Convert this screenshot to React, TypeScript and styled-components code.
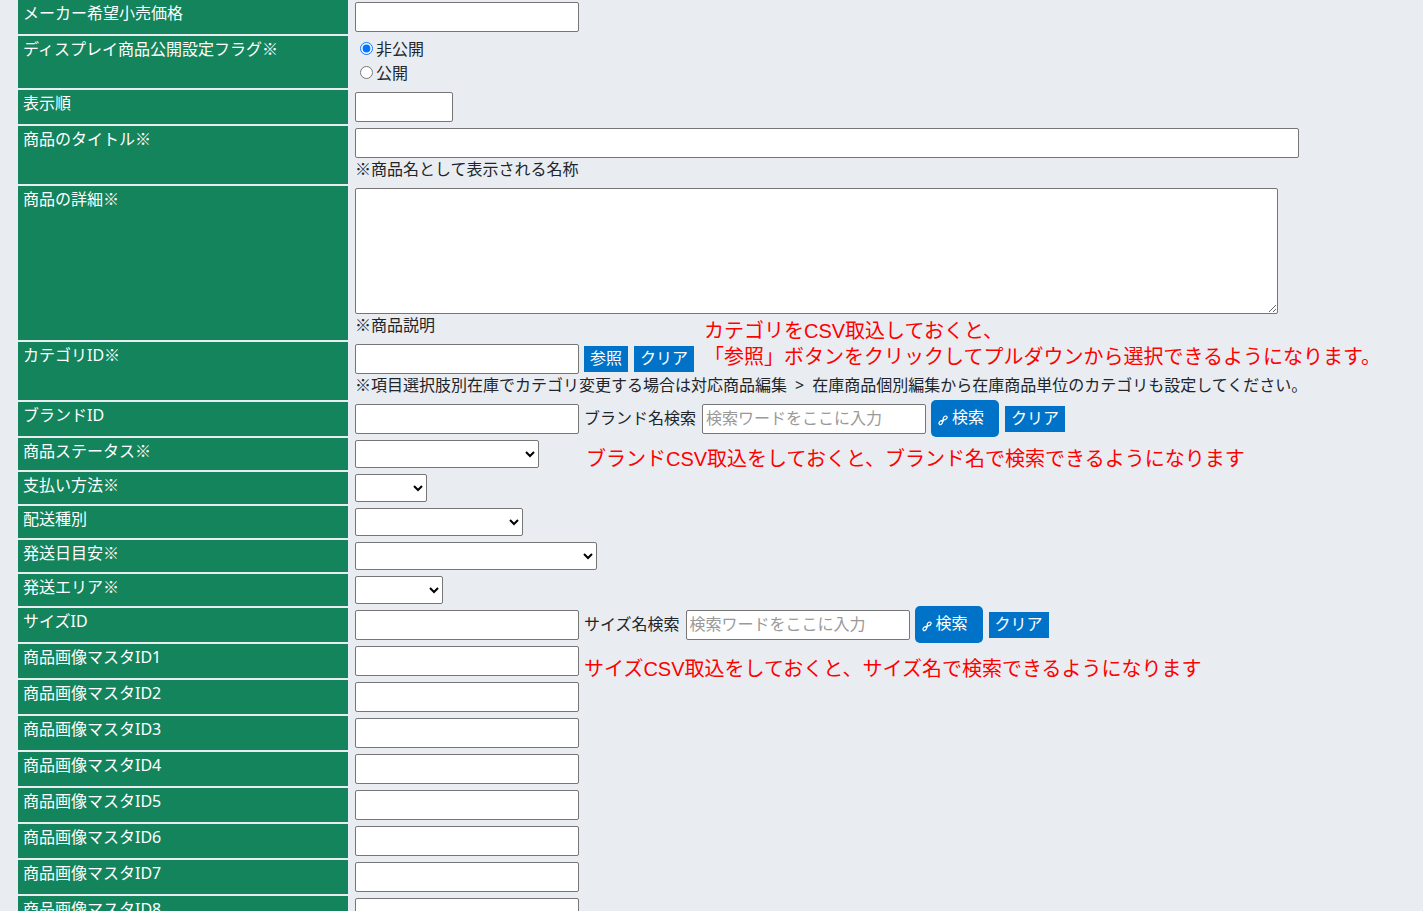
import React from "react";
import styled, { createGlobalStyle } from "styled-components";

const GlobalStyle = createGlobalStyle`
  html { scrollbar-width: none; }
  body {
    margin: 0;
    background: #e9edf2;
    color: #212529;
    font: 16px/24px "Noto Sans", "Noto Sans CJK JP", sans-serif;
  }
  *, *::before, *::after { box-sizing: border-box; }
`;

const Form = styled.form`
  display: flex;
  flex-direction: column;
  gap: 2px;
  padding: 0 18px;
`;

const Row = styled.div`
  display: grid;
  grid-template-columns: 330px minmax(0, 1fr);
  column-gap: 2px;
`;

const Heading = styled.div`
  padding: 1px 5px;
  background: #14845c;
  color: #fff;
`;

const Mark = styled.span`
  font-family: "Noto Sans CJK JP", sans-serif;
  line-height: 1;
`;

const Cell = styled.div`
  position: relative;
  padding: 2px 5px;
`;

const Line = styled.div`
  display: flex;
  align-items: center;
  gap: 5px;
`;

const InlineLabel = styled.label`
  padding: 0 1px 2px 0;
`;

const ButtonGroup = styled.div`
  display: flex;
  align-items: center;
  gap: 6px;
`;

const TextBox = styled.input<{ $width?: number }>`
  display: block;
  width: ${(p) => p.$width ?? 224}px;
  max-width: 100%;
  height: 30px;
  padding: 0 3px 2px;
  border: 1px solid #767676;
  border-radius: 2px;
  background: #fff;
  font: inherit;
  &::placeholder { color: #999; }
`;

const TextArea = styled.textarea`
  display: block;
  width: 923px;
  max-width: 100%;
  height: 126px;
  padding: 2px;
  border: 1px solid #767676;
  border-radius: 2px;
  background: #fff;
  font: inherit;
`;

const Select = styled.select<{ $width: number }>`
  display: block;
  width: ${(p) => p.$width}px;
  height: 28px;
  padding: 0 1px 0 0;
  border: 1px solid #767676;
  border-radius: 2px;
  background: #fff;
  color: #000;
  font: inherit;
`;

const Choices = styled.div`
  margin: -1px 0 1px;
`;

const Choice = styled.label`
  display: flex;
  align-items: center;
  gap: 3px;
  padding-left: 5px;
`;

const Radio = styled.input`
  width: 13px;
  height: 13px;
  margin: 0 0 2px;
`;

const Note = styled.p`
  margin: -1px 0 1px;
`;

const Separator = styled.span`
  padding: 0 8px;
`;

const Button = styled.button`
  height: 26px;
  padding: 0 6px 3px;
  border: 0;
  background: #0073c8;
  color: #fff;
  font: inherit;
  white-space: nowrap;
`;

const SearchButton = styled(Button)`
  display: flex;
  align-items: center;
  gap: 3px;
  height: 37px;
  margin: -4px 0 -3px;
  padding: 0 15px 3px 7px;
  border-radius: 5px;
`;

const Annotation = styled.p<{ $left: number; $top: number }>`
  position: absolute;
  left: ${(p) => p.$left}px;
  top: ${(p) => p.$top}px;
  margin: 0;
  color: #f00;
  font: 20px/26px "Liberation Sans", "Noto Sans CJK JP", sans-serif;
  white-space: nowrap;
`;

const LinkGlyph = styled.svg`
  margin-top: 5px;
`;

const LinkIcon = () => (
  <LinkGlyph width="11" height="12" viewBox="0 0 11 12" fill="none" stroke="#fff" strokeWidth="1.2" aria-hidden="true">
    <ellipse cx="7.2" cy="3.8" rx="1.5" ry="2.2" transform="rotate(50 7.2 3.8)" />
    <ellipse cx="2.8" cy="8.6" rx="1.5" ry="2.2" transform="rotate(35 2.8 8.6)" />
    <path d="M3.4 7.4C4.6 7.2 5 6.4 5.2 5.2M4.4 7.8C5.6 7.4 6 6.4 6.2 5" />
  </LinkGlyph>
);

type FieldProps = {
  label: string;
  id?: string;
  required?: boolean;
  children: React.ReactNode;
};

const Field = ({ label, id, required, children }: FieldProps) => (
  <Row>
    <Heading>
      <label htmlFor={id} id={id ? undefined : "visibility-label"}>
        {label}
        {required && <Mark>※</Mark>}
      </label>
    </Heading>
    <Cell>{children}</Cell>
  </Row>
);

const SearchField = ({ id, label, name, children }: { id: string; label: string; name: string; children?: React.ReactNode }) => (
  <Field label={label} id={id}>
    <Line>
      <TextBox id={id} type="text" />
      <InlineLabel htmlFor={`${id}-search`}>{name}</InlineLabel>
      <TextBox id={`${id}-search`} type="text" placeholder="検索ワードをここに入力" />
      <ButtonGroup>
        <SearchButton type="button">
          <LinkIcon />
          検索
        </SearchButton>
        <Button type="button">クリア</Button>
      </ButtonGroup>
    </Line>
    {children}
  </Field>
);

const selects = [
  { id: "status", label: "商品ステータス", required: true, width: 184 },
  { id: "payment", label: "支払い方法", required: true, width: 72 },
  { id: "delivery", label: "配送種別", required: false, width: 168 },
  { id: "ship-date", label: "発送日目安", required: true, width: 242 },
  { id: "ship-area", label: "発送エリア", required: true, width: 88 },
];

const images = [1, 2, 3, 4, 5, 6, 7, 8];

export default function App() {
  return (
    <>
      <GlobalStyle />
      <Form>
        <Field label="メーカー希望小売価格" id="price">
          <TextBox id="price" type="text" />
        </Field>
        <Field label="ディスプレイ商品公開設定フラグ" required>
          <Choices role="radiogroup" aria-labelledby="visibility-label">
            <Choice>
              <Radio type="radio" name="visibility" defaultChecked />
              非公開
            </Choice>
            <Choice>
              <Radio type="radio" name="visibility" />
              公開
            </Choice>
          </Choices>
        </Field>
        <Field label="表示順" id="order">
          <TextBox id="order" type="text" $width={98} />
        </Field>
        <Field label="商品のタイトル" id="title" required>
          <TextBox id="title" type="text" $width={944} />
          <Note><Mark>※</Mark>商品名として表示される名称</Note>
        </Field>
        <Field label="商品の詳細" id="detail" required>
          <TextArea id="detail" />
          <Note><Mark>※</Mark>商品説明</Note>
        </Field>
        <Field label="カテゴリID" id="category" required>
          <Line>
            <TextBox id="category" type="text" />
            <ButtonGroup>
              <Button type="button">参照</Button>
              <Button type="button">クリア</Button>
            </ButtonGroup>
          </Line>
          <Note>
            <Mark>※</Mark>項目選択肢別在庫でカテゴリ変更する場合は対応商品編集<Separator>&gt;</Separator>在庫商品個別編集から在庫商品単位のカテゴリも設定してください。
          </Note>
          <Annotation $left={354} $top={-24}>
            カテゴリをCSV取込しておくと、
            <br />
            「参照」ボタンをクリックしてプルダウンから選択できるようになります。
          </Annotation>
        </Field>
        <SearchField id="brand" label="ブランドID" name="ブランド名検索">
          <Annotation $left={236} $top={44}>
            ブランドCSV取込をしておくと、ブランド名で検索できるようになります
          </Annotation>
        </SearchField>
        {selects.map((s) => (
          <Field key={s.id} label={s.label} id={s.id} required={s.required}>
            <Select id={s.id} $width={s.width}>
              <option value="" />
            </Select>
          </Field>
        ))}
        <SearchField id="size" label="サイズID" name="サイズ名検索">
          <Annotation $left={234} $top={48}>
            サイズCSV取込をしておくと、サイズ名で検索できるようになります
          </Annotation>
        </SearchField>
        {images.map((n) => (
          <Field key={n} label={`商品画像マスタID${n}`} id={`image-${n}`}>
            <TextBox id={`image-${n}`} type="text" />
          </Field>
        ))}
      </Form>
    </>
  );
}
